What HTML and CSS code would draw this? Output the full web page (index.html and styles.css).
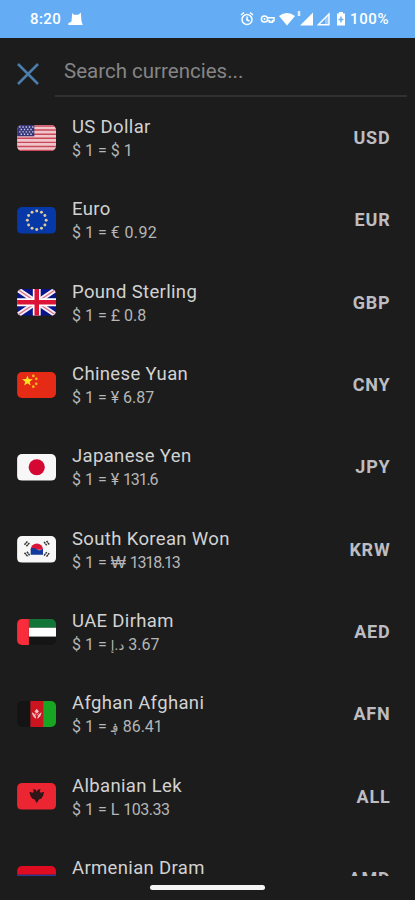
FILE: index.html
```html
<!DOCTYPE html>
<html lang="en">
<head>
<meta charset="utf-8">
<title>Currencies</title>
<link rel="stylesheet" href="styles.css">
</head>
<body>
<div class="screen">
  <header class="status">
    <span class="time">8:20</span>
    <svg class="cat" viewBox="0 0 15 14"><path d="M4.200 1 6 2.700h4.500L12.800.500 13.500 9l1.200 4H.300v-1.700L3.500 9.500z" fill="#fff"/></svg>
    <svg class="indicators" viewBox="0 0 107 16">
      <g fill="none" stroke="#fff" stroke-width="1.500"><circle cx="7" cy="8.500" r="5"/><path d="M7 5.500V9l2.500 1M1 4l3-2.500M10 1.500 13 4"/></g>
      <g fill="none" stroke="#fff" stroke-width="1.500"><circle cx="24.500" cy="8" r="3.100"/><path d="M27.500 6.700H34v3h-1.500v1.600h-3V9.700h-2"/></g><circle cx="24.500" cy="8" r="1" fill="#fff"/>
      <path d="M39 5q8-6 16 0L47 14.500z" fill="#fff"/>
      <path d="M59 0v5" stroke="#fff" stroke-width="2.500" opacity=".8"/>
      <path d="M73 1.500V14.500H60z" fill="#fff"/>
      <path d="M89 3v10.800H78.300z" fill="none" stroke="#fff" stroke-width="1.400"/><path d="M85 7v6h4V3z" fill="#fff" opacity=".35"/>
      <path d="M99 1h4v1.500h2V14.500h-8V2.500h2z" fill="#fff"/><path d="M101 5.500v6M98.600 8.500h4.800" stroke="#64adf4" stroke-width="1.400"/>
    </svg>
    <span class="battery">100%</span>
  </header>
  <div class="search">
    <svg class="close" viewBox="0 0 24 24"><path d="m2 2 20 20M22 2 2 22" stroke="#4b7eac" stroke-width="2.500" fill="none"/></svg>
    <div class="field">Search currencies...</div>
  </div>
  <main class="list">
    <div class="row">
      <svg class="flag" viewBox="0 0 40 27"><rect width="40" height="27" fill="#f0c5ca"/><path d="M0 1h40M0 5.200h40M0 9.400h40M0 13.500h40M0 17.700h40M0 21.800h40M0 26h40" stroke="#c84758" stroke-width="1.500"/><rect width="17.500" height="11.500" fill="#343477"/><path d="M2 2h15M3.500 4.500h13M2 7h15M3.500 9.500h13" stroke="#c8c8e2" stroke-width="1.500" stroke-dasharray="1.500 1.800"/></svg>
      <div class="info"><div class="name">US Dollar</div><div class="rate">$ 1 = $ 1</div></div><div class="code">USD</div>
    </div>
    <div class="row">
      <svg class="flag" viewBox="0 0 40 27"><rect width="40" height="27" fill="#0738a7"/><g fill="#dec99b"><circle cx="20" cy="4" r="1.500"/><circle cx="24.800" cy="5.300" r="1.500"/><circle cx="28.300" cy="8.700" r="1.500"/><circle cx="29.600" cy="13.500" r="1.500"/><circle cx="28.300" cy="18.300" r="1.500"/><circle cx="24.800" cy="21.700" r="1.500"/><circle cx="20" cy="23" r="1.500"/><circle cx="15.200" cy="21.700" r="1.500"/><circle cx="11.700" cy="18.300" r="1.500"/><circle cx="10.400" cy="13.500" r="1.500"/><circle cx="11.700" cy="8.700" r="1.500"/><circle cx="15.200" cy="5.300" r="1.500"/></g></svg>
      <div class="info"><div class="name">Euro</div><div class="rate">$ 1 = <span class="wide">€ 0.92</span></div></div><div class="code">EUR</div>
    </div>
    <div class="row">
      <svg class="flag" viewBox="0 0 40 27"><rect width="40" height="27" fill="#07148a"/><path d="m0 0 40 27M40 0 0 27" stroke="#f4eef5" stroke-width="5"/><path d="m0 0 40 27M40 0 0 27" stroke="#df718c" stroke-width="1.300"/><path d="M20 0v27M0 13.500h40" stroke="#fff" stroke-width="8"/><path d="M20 0v27M0 13.500h40" stroke="#dc1237" stroke-width="4.600"/></svg>
      <div class="info"><div class="name">Pound Sterling</div><div class="rate">$ 1 = £ 0.8</div></div><div class="code">GBP</div>
    </div>
    <div class="row">
      <svg class="flag" viewBox="0 0 40 27"><rect width="40" height="27" fill="#e52b16"/><path d="m10.500 3.500 1.400 3.700 4 .2-3.100 2.500 1 3.800-3.300-2.200-3.300 2.200 1-3.800-3.100-2.500 4-.2z" fill="#ffe322"/><g fill="#f5b31d"><circle cx="16.500" cy="4" r="1.400"/><circle cx="19.500" cy="7" r="1.400"/><circle cx="19.500" cy="12" r="1.400"/><circle cx="16.500" cy="15" r="1.400"/></g></svg>
      <div class="info"><div class="name">Chinese Yuan</div><div class="rate">$ 1 = ¥ 6.87</div></div><div class="code">CNY</div>
    </div>
    <div class="row">
      <svg class="flag" viewBox="0 0 40 27"><rect width="40" height="27" fill="#f7f7f7"/><circle cx="20" cy="13.500" r="8.200" fill="#d50834"/></svg>
      <div class="info"><div class="name">Japanese Yen</div><div class="rate">$ 1 = ¥ <span class="tighter">131.6</span></div></div><div class="code">JPY</div>
    </div>
    <div class="row">
      <svg class="flag" viewBox="0 0 40 27"><rect width="40" height="27" fill="#f7f7f7"/><path d="M13.800 14a6.300 6.300 0 0 1 12.600 0z" fill="#d91637"/><path d="M13.800 13q3-2 6 .5t6.600-.5V19H13.800z" fill="#123b9d"/><path d="m7.500 9 3-3.500M9.500 10.500l3-3.500M27.500 6l3 4M30 5l3 4M7.500 17l3.500 4M10 16l3 4M27.500 20l3-4M30 21l3-4" stroke="#333" stroke-width="1.500" stroke-dasharray="2 .5"/></svg>
      <div class="info"><div class="name">South Korean Won</div><div class="rate">$ 1 = <span class="won">₩</span> <span class="tighter">1318.13</span></div></div><div class="code">KRW</div>
    </div>
    <div class="row">
      <svg class="flag" viewBox="0 0 40 27"><path d="M12 0h28v9H12z" fill="#137537"/><path d="M12 9h28v9H12z" fill="#fff"/><path d="M12 18h28v9H12z" fill="#151515"/><path d="M0 0h12v27H0z" fill="#f92c3b"/></svg>
      <div class="info"><div class="name">UAE Dirham</div><div class="rate">$ 1 = <bdi class="arabic">د.إ</bdi> 3.67</div></div><div class="code">AED</div>
    </div>
    <div class="row">
      <svg class="flag" viewBox="0 0 40 27"><path d="M0 0h13.500v27H0z" fill="#141414"/><path d="M13.500 0h13v27h-13z" fill="#cc1421"/><path d="M26.500 0H40v27H26.500z" fill="#18a521"/><path d="m20 8.500 1.700 2-1 1.500h-1.400l-1-1.500zM15.500 12q1 4.500 3.500 5.500-.2-3.500-3.500-5.500M24.500 12q-1 4.500-3.500 5.500.2-3.500 3.500-5.500M18.300 12.500l1 2M21.700 12.500l-1 2" fill="#f1c7c4" stroke="#f1c7c4" stroke-width=".8"/></svg>
      <div class="info"><div class="name">Afghan Afghani</div><div class="rate">$ 1 = <bdi class="arabic">؋</bdi> <span class="tight">86.41</span></div></div><div class="code">AFN</div>
    </div>
    <div class="row">
      <svg class="flag" viewBox="0 0 40 27"><rect width="40" height="27" fill="#eb2632"/><path d="m16 6 3 1 1 2 1-2 3-1-1 2.500 1 1.500 3.500-1-1 4-2 3-2 .5-2.500 4-2.500-4-2-.5-2-3-1-4 3.500 1 1-1.500z" fill="#301519"/></svg>
      <div class="info"><div class="name">Albanian Lek</div><div class="rate">$ 1 = L <span class="tight">103.33</span></div></div><div class="code">ALL</div>
    </div>
    <div class="row">
      <svg class="flag" viewBox="0 0 40 27"><path d="M0 0h40v9H0z" fill="#df0b20"/><path d="M0 9h40v9H0z" fill="#263b98"/><path d="M0 18h40v9H0z" fill="#efa51c"/></svg>
      <div class="info"><div class="name">Armenian Dram</div><div class="rate"></div></div><div class="code">AMD</div>
    </div>
  </main>
  <footer class="nav"><div class="handle"></div></footer>
</div>
</body>
</html>
```
FILE: styles.css
```css
* { box-sizing: border-box; }
body { margin: 0; background: #1c1c1c; font-family: Roboto, "Noto Sans", "DejaVu Sans", sans-serif; }
.screen { height: 900px; display: flex; flex-direction: column; overflow: hidden; background: #1c1c1c; }
.status { flex: none; height: 37.5px; background: #64adf4; color: #fff; display: flex; align-items: center; padding: 0 25px 0 30px; font-size: 15px; font-weight: 500; }
.time { width: 38px; letter-spacing: .4px; }
.cat { width: 15px; height: 14px; }
.indicators { width: 107px; height: 16px; margin-left: auto; margin-right: 3px; }
.battery { width: 40px; white-space: nowrap; letter-spacing: .6px; }
.search { flex: none; height: 59.5px; display: flex; padding-left: 16px; }
.close { width: 24px; height: 24px; margin-top: 24px; }
.field { flex: 1; margin: 0 8px 0 15px; padding: 19px 0 0 9px; border-bottom: 2px solid #303030; color: #858585; font-size: 20.5px; line-height: 28px; }
.list { flex: none; height: 778.5px; overflow: hidden; }
.row { height: 82.3px; display: flex; align-items: center; padding: 0 25px 0 16.5px; }
.flag { width: 39.5px; height: 26.5px; border-radius: 5px; flex: none; }
.info { flex: 1; margin-left: 16px; padding-top: 2px; white-space: nowrap; }
.name { font-size: 18.5px; line-height: 24px; color: #d2d2d2; letter-spacing: .35px; }
.rate { height: 24px; font-size: 16px; line-height: 24px; color: #b6b6b6; }
.wide { letter-spacing: .4px; }
.tight { letter-spacing: -.5px; }
.tighter { letter-spacing: -1.2px; }
.won { font-family: "Liberation Sans", sans-serif; }
.arabic { font-family: "DejaVu Sans", sans-serif; font-size: 13px; }
.code { margin-top: -1px; font-size: 18px; font-weight: 700; color: #bdbdc1; letter-spacing: .8px; margin-right: -.5px; }
.nav { flex: 1; display: flex; justify-content: center; padding-top: 9px; }
.handle { width: 115px; height: 5px; border-radius: 3px; background: #f5f5f5; }
```
